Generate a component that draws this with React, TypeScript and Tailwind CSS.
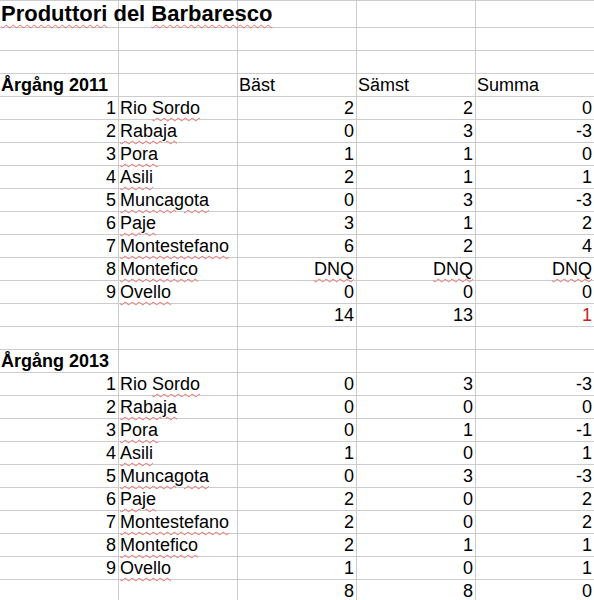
import React from "react";

type Row = [string, string, string, string, string];

const wavy =
  "underline decoration-wavy decoration-[#f06b6b] decoration-1 underline-offset-[3px]";

function Sp({ children }: { children: React.ReactNode }) {
  return <span className={wavy}>{children}</span>;
}

function nameNode(name: string) {
  if (name.startsWith("Rio ")) {
    return (
      <>
        Rio <Sp>{name.slice(4)}</Sp>
      </>
    );
  }
  return <Sp>{name}</Sp>;
}

function valNode(v: string) {
  if (v === "DNQ") return <Sp>DNQ</Sp>;
  return v;
}

const y2011: Row[] = [
  ["1", "Rio Sordo", "2", "2", "0"],
  ["2", "Rabaja", "0", "3", "-3"],
  ["3", "Pora", "1", "1", "0"],
  ["4", "Asili", "2", "1", "1"],
  ["5", "Muncagota", "0", "3", "-3"],
  ["6", "Paje", "3", "1", "2"],
  ["7", "Montestefano", "6", "2", "4"],
  ["8", "Montefico", "DNQ", "DNQ", "DNQ"],
  ["9", "Ovello", "0", "0", "0"],
];

const y2013: Row[] = [
  ["1", "Rio Sordo", "0", "3", "-3"],
  ["2", "Rabaja", "0", "0", "0"],
  ["3", "Pora", "0", "1", "-1"],
  ["4", "Asili", "1", "0", "1"],
  ["5", "Muncagota", "0", "3", "-3"],
  ["6", "Paje", "2", "0", "2"],
  ["7", "Montestefano", "2", "0", "2"],
  ["8", "Montefico", "2", "1", "1"],
  ["9", "Ovello", "1", "0", "1"],
];

const rowCls = "grid grid-cols-[119px_119px_119px_119px_119px] h-[23px]";
const cellCls =
  "border-r border-b border-[#cccccc] text-[18px] leading-[22px] whitespace-nowrap";
const left = cellCls + " pl-[1px] text-left";
const right = cellCls + " pr-[2px] text-right";

function Empty() {
  return (
    <div className={rowCls}>
      <div className={cellCls} />
      <div className={cellCls} />
      <div className={cellCls} />
      <div className={cellCls} />
      <div className={cellCls} />
    </div>
  );
}

function DataRow({ r }: { r: Row }) {
  return (
    <div className={rowCls}>
      <div className={right}>{r[0]}</div>
      <div className={left}>{nameNode(r[1])}</div>
      <div className={right}>{valNode(r[2])}</div>
      <div className={right}>{valNode(r[3])}</div>
      <div className={right}>{valNode(r[4])}</div>
    </div>
  );
}

function TotalRow({ a, b, c, red }: { a: string; b: string; c: string; red?: boolean }) {
  return (
    <div className={rowCls}>
      <div className={cellCls} />
      <div className={cellCls} />
      <div className={right}>{a}</div>
      <div className={right}>{b}</div>
      <div className={right + (red ? " text-[#c9211e]" : "")}>{c}</div>
    </div>
  );
}

export default function App() {
  return (
    <div className="w-[594px] h-[600px] overflow-hidden bg-white text-black font-['Liberation_Sans',Arial,sans-serif]">
      <div className="w-[595px] border-t border-[#cccccc]">
        <div className="grid grid-cols-[119px_119px_119px_119px_119px] h-[27px]">
          <div className="border-r border-b border-[#cccccc] text-[22px] leading-[26px] font-bold whitespace-nowrap pl-[1px] overflow-visible relative z-10">
            <Sp>Produttori</Sp> del <Sp>Barbaresco</Sp>
          </div>
          <div className={cellCls} />
          <div className={cellCls} />
          <div className={cellCls} />
          <div className={cellCls} />
        </div>
        <Empty />
        <Empty />
        <div className={rowCls}>
          <div className={left + " font-bold"}>Årgång 2011</div>
          <div className={cellCls} />
          <div className={left}>Bäst</div>
          <div className={left}>Sämst</div>
          <div className={left}>Summa</div>
        </div>
        {y2011.map((r) => (
          <DataRow key={"a" + r[0]} r={r} />
        ))}
        <TotalRow a="14" b="13" c="1" red />
        <Empty />
        <div className={rowCls}>
          <div className={left + " font-bold"}>Årgång 2013</div>
          <div className={cellCls} />
          <div className={cellCls} />
          <div className={cellCls} />
          <div className={cellCls} />
        </div>
        {y2013.map((r) => (
          <DataRow key={"b" + r[0]} r={r} />
        ))}
        <TotalRow a="8" b="8" c="0" />
      </div>
    </div>
  );
}
